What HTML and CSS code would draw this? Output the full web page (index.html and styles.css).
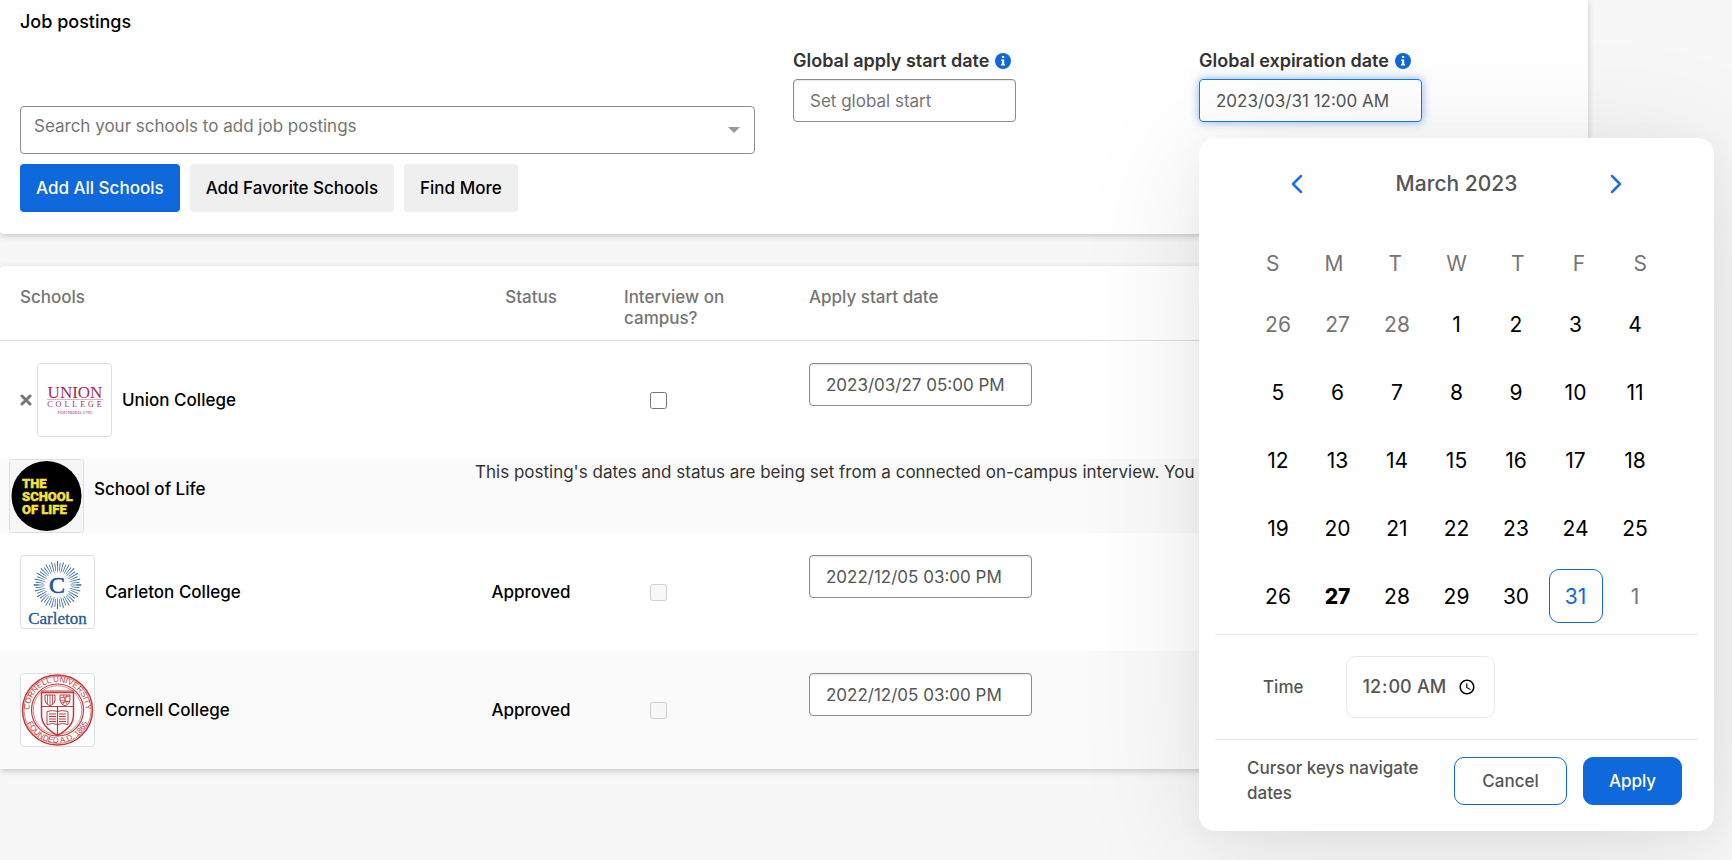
FILE: index.html
```html
<!DOCTYPE html>
<html lang="en">
<head>
    <meta charset="UTF-8">
    <meta name="viewport" content="width=device-width, initial-scale=1.0">
    <title>Job postings</title>
    <link rel="stylesheet" href="styles.css">
</head>
<body>
    <main class="page">
        <section class="card postings">
            <div class="search-col">
                <h1>Job postings</h1>
                <div class="search-box">
                    <input type="text" aria-label="Search your schools" placeholder="Search your schools to add job postings">
                    <svg width="12" height="6" viewBox="0 0 12 6"><path d="M0 0h12L6 6z" fill="#999"/></svg>
                </div>
                <div class="actions">
                    <button class="btn primary">Add All Schools</button>
                    <button class="btn">Add Favorite Schools</button>
                    <button class="btn">Find More</button>
                </div>
            </div>
            <div class="date-col">
                <label for="start">Global apply start date
                    <svg class="info" viewBox="0 0 16 16"><circle cx="8" cy="8" r="8" fill="#0f69dc"/><path d="M7 3h2.200v2H7zM6 6.500h3.200v4.500H10v1.500H6V11h.9V8H6z" fill="#fff"/></svg>
                </label>
                <input type="text" id="start" class="date-input" placeholder="Set global start">
            </div>
            <div class="date-col">
                <label for="expiration">Global expiration date
                    <svg class="info" viewBox="0 0 16 16"><circle cx="8" cy="8" r="8" fill="#0f69dc"/><path d="M7 3h2.200v2H7zM6 6.500h3.200v4.500H10v1.500H6V11h.9V8H6z" fill="#fff"/></svg>
                </label>
                <input type="text" id="expiration" class="date-input active" value="2023/03/31 12:00 AM">

                <div class="picker">
                    <div class="picker-head">
                        <button class="arrow" aria-label="Previous month"><svg width="12" height="20" viewBox="0 0 12 20"><path d="M10 2L2 10l8 8"/></svg></button>
                        <h2>March 2023</h2>
                        <button class="arrow" aria-label="Next month"><svg width="12" height="20" viewBox="0 0 12 20"><path d="M2 2l8 8-8 8"/></svg></button>
                    </div>
                    <div class="weekdays">
                        <span>S</span><span>M</span><span>T</span><span>W</span><span>T</span><span>F</span><span>S</span>
                    </div>
                    <div class="days">
                        <button class="other">26</button>
                        <button class="other">27</button>
                        <button class="other">28</button>
                        <button>1</button>
                        <button>2</button>
                        <button>3</button>
                        <button>4</button>
                        <button>5</button>
                        <button>6</button>
                        <button>7</button>
                        <button>8</button>
                        <button>9</button>
                        <button>10</button>
                        <button>11</button>
                        <button>12</button>
                        <button>13</button>
                        <button>14</button>
                        <button>15</button>
                        <button>16</button>
                        <button>17</button>
                        <button>18</button>
                        <button>19</button>
                        <button>20</button>
                        <button>21</button>
                        <button>22</button>
                        <button>23</button>
                        <button>24</button>
                        <button>25</button>
                        <button>26</button>
                        <button class="today">27</button>
                        <button>28</button>
                        <button>29</button>
                        <button>30</button>
                        <button class="selected">31</button>
                        <button class="other">1</button>
                    </div>
                    <div class="time-row">
                        <label for="time">Time</label>
                        <input type="time" id="time" value="00:00">
                    </div>
                    <div class="picker-foot">
                        <p>Cursor keys navigate dates</p>
                        <button class="cancel">Cancel</button>
                        <button class="apply">Apply</button>
                    </div>
                </div>
            </div>
        </section>

        <section class="card">
            <table class="schools">
                <colgroup>
                    <col class="col-school">
                    <col class="col-status">
                    <col class="col-interview">
                    <col>
                </colgroup>
                <thead>
                    <tr>
                        <th>Schools</th>
                        <th class="status">Status</th>
                        <th>Interview on campus?</th>
                        <th>Apply start date</th>
                    </tr>
                </thead>
                <tbody>
                    <tr>
                        <td>
                            <div class="school">
                                <button class="remove" aria-label="Remove Union College"><svg width="12" height="12" viewBox="0 0 12 12"><path d="M2 2l8 8M10 2l-8 8"/></svg></button>
                                <svg class="logo" viewBox="0 0 73 72">
                                    <g font-family="Liberation Serif, serif" fill="#a62a52" text-anchor="middle">
                                        <text x="37" y="34" font-size="17">UNION</text>
                                        <path d="M9 35.500h56" stroke="#dfb3c2"/>
                                        <text x="38" y="43" font-size="8" letter-spacing="3">COLLEGE</text>
                                        <text x="37" y="50" font-size="5">FOUNDED 1795</text>
                                    </g>
                                </svg>
                                <span>Union College</span>
                            </div>
                        </td>
                        <td class="status"></td>
                        <td class="check"><input type="checkbox" aria-label="Interview on campus, Union College"></td>
                        <td class="start"><input type="text" class="date-input" aria-label="Apply start date, Union College" value="2023/03/27 05:00 PM"></td>
                    </tr>
                    <tr class="connected">
                        <td>
                            <div class="school">
                                <svg class="logo" viewBox="0 0 73 72">
                                    <path d="M0 0h73v72H0z" fill="#f6f6f6"/>
                                    <circle cx="36.500" cy="36" r="35" fill="#000"/>
                                    <g font-family="Roboto, sans-serif" font-weight="900" font-size="13" fill="#f5e13c" stroke="#f5e13c" stroke-width=".4">
                                        <text x="12" y="28">THE</text>
                                        <text x="12" y="41">SCHOOL</text>
                                        <text x="12" y="54">OF LIFE</text>
                                    </g>
                                </svg>
                                <span>School of Life</span>
                            </div>
                        </td>
                        <td colspan="3" class="note">This posting's dates and status are being set from a connected on-campus interview. You may edit them there.</td>
                    </tr>
                    <tr>
                        <td>
                            <div class="school">
                                <svg class="logo" viewBox="0 0 73 72">
                                    <g fill="none" stroke="#2a62a0">
                                        <circle cx="36.500" cy="29" r="18" stroke-width="11" pathLength="240" stroke-dasharray="1.600 8.400" stroke-dashoffset="0.800"/>
                                        <circle cx="36.500" cy="29" r="18" stroke-width="8" pathLength="240" stroke-dasharray="1.600 8.400" stroke-dashoffset="5.800"/>
                                        <path d="M36.500 5v5M36.500 48v5M12.500 29h5M55.500 29h5" />
                                    </g>
                                    <g font-family="Liberation Serif, serif" fill="#1f5799" stroke="#1f5799" text-anchor="middle">
                                        <text x="36" y="37" font-size="24" stroke-width=".6">C</text>
                                        <text x="36.500" y="68" font-size="17" stroke-width=".3">Carleton</text>
                                    </g>
                                </svg>
                                <span>Carleton College</span>
                            </div>
                        </td>
                        <td class="status">Approved</td>
                        <td class="check"><input type="checkbox" disabled aria-label="Interview on campus, Carleton College"></td>
                        <td class="start"><input type="text" class="date-input" aria-label="Apply start date, Carleton College" value="2022/12/05 03:00 PM"></td>
                    </tr>
                    <tr>
                        <td>
                            <div class="school">
                                <svg class="logo" viewBox="0 0 73 72">
                                    <path id="seal-top" d="M8.500 36a28 28 0 0 1 56 0" fill="none"/>
                                    <path id="seal-bottom" d="M3.500 36a33 33 0 0 0 66 0" fill="none"/>
                                    <g fill="none" stroke="#c5383b">
                                        <circle cx="36.500" cy="36" r="35" stroke-width="1.500"/>
                                        <circle cx="36.500" cy="36" r="33.500" stroke-width=".6"/>
                                        <circle cx="36.500" cy="36" r="26" stroke-width="1.200"/>
                                        <circle cx="36.500" cy="36" r="24.300" stroke-width=".6"/>
                                        <path d="M20.500 18.500h32v23q0 11-16 20-16-9-16-20z" stroke-width="1.500"/>
                                        <path d="M20 17h33M20.500 32.500h32M36.500 33v28" stroke-width="1.200"/>
                                        <path d="M24 21h10v5q0 4-5 6-5-2-5-6zM39 21h10v5q0 4-5 6-5-2-5-6z"/>
                                        <path d="M26.500 21v9M29 21v10M31.500 21v9M39 24l10-2M39 26l10 2M40 29l8-2M42 21l4 9M46 21l-4 9" stroke-width=".8"/>
                                        <path d="M26 37.500q6-2 10.500 0 4.500-2 10.500 0v13q-6-2-10.500 0-4.500-2-10.500 0z"/>
                                        <path d="M28 40h7M28 42.500h7M28 45h7M28 47.500h7M38 40h7M38 42.500h7M38 45h7M38 47.500h7" stroke-width="1"/>
                                    </g>
                                    <g font-family="Liberation Sans, sans-serif" font-size="8" fill="#c5383b" text-anchor="middle">
                                        <text><textPath href="#seal-top" startOffset="50%">CORNELL UNIVERSITY</textPath></text>
                                        <text><textPath href="#seal-bottom" startOffset="50%">FOUNDED A.D. 1865</textPath></text>
                                    </g>
                                </svg>
                                <span>Cornell College</span>
                            </div>
                        </td>
                        <td class="status">Approved</td>
                        <td class="check"><input type="checkbox" disabled aria-label="Interview on campus, Cornell College"></td>
                        <td class="start"><input type="text" class="date-input" aria-label="Apply start date, Cornell College" value="2022/12/05 03:00 PM"></td>
                    </tr>
                </tbody>
            </table>
        </section>
    </main>
</body>
</html>
```
FILE: styles.css
```css
* {
    box-sizing: border-box;
}
body {
    min-height: 100vh;
    margin: 0;
    background: #f7f7f7;
    color: #000;
    font-family: Inter, "Liberation Sans", sans-serif;
    font-size: 17px;
    line-height: 24px;
}
button, input {
    font-family: inherit;
    font-size: inherit;
}
button {
    padding: 0;
    border: none;
    background: none;
    cursor: pointer;
}
h1, h2, p {
    margin: 0;
}
.page {
    display: flex;
    flex-direction: column;
    gap: 32px;
    margin-right: 144px;
}
.card {
    background: #fff;
    border-radius: 4px;
    box-shadow: 0 2px 6px rgba(0, 0, 0, 0.2);
}
.postings {
    display: grid;
    grid-template-columns: 773fr 406fr 369fr;
    padding: 10px 20px 22px;
    border-radius: 0 0 4px 4px;
}
.search-col {
    padding-right: 38px;
}
h1 {
    font-size: 18px;
    font-weight: 500;
}
.search-box {
    display: flex;
    align-items: center;
    height: 48px;
    margin-top: 72px;
    padding: 0 14px 0 13px;
    border: 1px solid #8c8c8c;
    border-radius: 4px;
}
.search-box input {
    flex: 1;
    height: 46px;
    padding: 0 0 8px;
    border: none;
    outline: none;
    background: none;
}
input::placeholder {
    color: #757575;
}
.actions {
    display: flex;
    gap: 10px;
    margin-top: 10px;
}
.btn {
    height: 48px;
    padding: 0 16px;
    border-radius: 4px;
    background: #efefef;
    color: #000;
    font-weight: 500;
}
.primary {
    background: #0f69dc;
    color: #fff;
}
.date-col {
    position: relative;
    padding-top: 39px;
}
.date-col > label {
    display: flex;
    align-items: center;
    gap: 6px;
    margin-bottom: 6px;
    color: #333;
    font-size: 18px;
    font-weight: 600;
}
.info {
    width: 16px;
    height: 16px;
}
.date-input {
    display: block;
    width: 223px;
    height: 43px;
    padding: 0 16px;
    border: 1px solid #8c8c8c;
    border-radius: 4px;
    background: #fff;
    box-shadow: inset 0 1px 2px rgba(0, 0, 0, 0.1);
    color: #555;
}
.date-input.active {
    border-color: #0f7bf5;
    background: none;
    box-shadow: 0 0 10px rgba(15, 105, 220, 0.5);
    outline: none;
}

/* date picker */
.picker {
    position: absolute;
    top: 128px;
    left: 0;
    width: 515px;
    padding: 30px 16px 25px;
    border-radius: 16px;
    background: #fff;
    box-shadow: 0 16px 128px rgba(0, 0, 0, 0.1), 0 4px 32px rgba(0, 0, 0, 0.04);
    color: #555;
    font-weight: 500;
}
.picker-head {
    display: flex;
    align-items: center;
    justify-content: space-between;
    height: 32px;
    padding: 0 70px;
}
.picker-head h2 {
    font-size: 21px;
    font-weight: 500;
}
.arrow {
    display: flex;
    justify-content: center;
    width: 24px;
}
.arrow path {
    fill: none;
    stroke: #2271e0;
    stroke-width: 2.5;
    stroke-linecap: round;
    stroke-linejoin: round;
}
.weekdays {
    display: grid;
    grid-template-columns: repeat(7, 1fr);
    margin-top: 52px;
    padding: 0 27px;
    color: #757575;
    font-size: 21px;
    font-weight: 400;
    text-align: center;
}
.days {
    display: grid;
    grid-template-columns: repeat(7, 54px);
    justify-content: space-between;
    row-gap: 14px;
    margin-top: 21px;
    padding: 0 36px 11px;
    border-bottom: 1px solid #e8e8e8;
}
.days button {
    height: 54px;
    border-radius: 10px;
    color: #000;
    font-size: 21px;
}
.days .other {
    color: #757575;
}
.days .today {
    font-weight: 800;
}
.days .selected {
    border: 1px solid #0f69dc;
    color: #0f69dc;
}
.time-row {
    display: flex;
    align-items: center;
    gap: 43px;
    padding: 21px 48px;
    border-bottom: 1px solid #e8e8e8;
}
.time-row input {
    height: 62px;
    padding: 0 14px;
    border: 1px solid #e8e8e8;
    border-radius: 10px;
    background: #fff;
    color: #555;
    font-size: 18px;
    font-weight: 500;
}
.picker-foot {
    display: flex;
    align-items: center;
    gap: 16px;
    padding: 16px 16px 0 32px;
}
.picker-foot p {
    flex: 1;
    line-height: 25px;
}
.cancel, .apply {
    width: 113px;
    height: 48px;
    border: 1px solid #0f69dc;
    border-radius: 10px;
    color: #555;
    font-weight: 500;
}
.apply {
    width: 99px;
    background: #0f69dc;
    color: #fff;
}

/* schools table */
.schools {
    width: 100%;
    table-layout: fixed;
    border-collapse: collapse;
}
.col-school {
    width: 475px;
}
.col-status {
    width: 112px;
}
.col-interview {
    width: 185px;
}
th {
    padding: 21px 37px 11px;
    border-bottom: 1px solid #ddd;
    color: #757575;
    font-weight: 500;
    line-height: 21px;
    text-align: left;
    vertical-align: top;
}
th:first-child {
    padding-left: 20px;
}
td {
    padding: 22px 0 22px 37px;
    font-weight: 500;
}
td:first-child {
    padding-left: 20px;
}
th.status, td.status {
    padding-left: 0;
    padding-right: 0;
    text-align: center;
}
td.start {
    vertical-align: top;
}
.school {
    display: flex;
    align-items: center;
    height: 74px;
}
.logo {
    width: 75px;
    height: 74px;
    margin-right: 10px;
    border: 1px solid #ddd;
    border-radius: 4px;
    background: #fff;
}
.remove {
    display: flex;
    margin-right: 5px;
}
.remove path {
    fill: none;
    stroke: #757575;
    stroke-width: 3;
    stroke-linecap: round;
}
tbody tr:nth-child(even) {
    background: #fafafa;
}
.check input {
    display: block;
    width: 17px;
    height: 17px;
    margin: 0 0 0 26px;
}
.connected td {
    padding: 0;
    vertical-align: top;
}
.connected td:first-child {
    padding-left: 9px;
}
.connected .school span {
    margin-bottom: 14px;
}
.connected .note {
    padding-top: 1px;
    color: #333;
    font-weight: 400;
}
```
